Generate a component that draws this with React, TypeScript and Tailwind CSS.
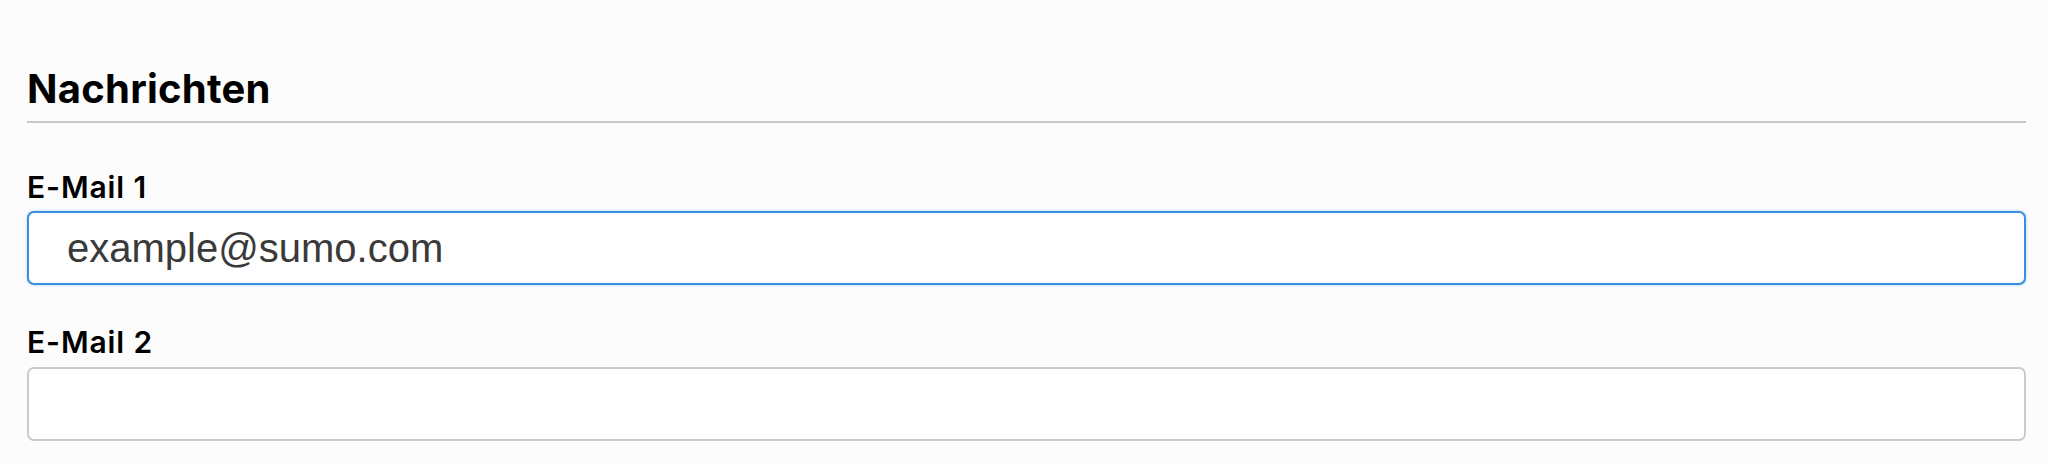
import { useState } from 'react';

const Field = ({ label, value, focused }: { label: string; value: string; focused?: boolean }) => {
  const [text, setText] = useState(value);
  return (
    <div className="flex flex-col">
      <label className="text-[30px] leading-[35px] font-semibold tracking-[0.9px] text-black font-['Inter','Liberation_Sans',sans-serif]">
        {label}
      </label>
      <input
        value={text}
        onChange={(e) => setText(e.target.value)}
        className={
          focused
            ? 'mt-[6px] h-[74px] w-full rounded-[7px] border-2 border-[#3b8ede] bg-white pl-[38px] text-[40px] text-[#3a3a3a] outline-none shadow-[0_0_3px_rgba(59,142,222,0.45)] font-["Liberation_Sans",Arial,sans-serif]'
            : 'mt-[7px] h-[74px] w-full rounded-[7px] border-2 border-[#cbcbcb] bg-white pl-[38px] text-[40px] text-[#3a3a3a] outline-none font-["Liberation_Sans",Arial,sans-serif]'
        }
      />
    </div>
  );
}

export default function App() {
  return (
    <div className="min-h-[464px] w-full bg-[#fcfcfc] pl-[27px] pr-[22px] pt-[65px]">
      <h2 className="border-b-2 border-[#c9c9c9] pb-[8px] text-[40px] leading-[48px] font-bold tracking-[0.25px] text-black font-['Inter','Liberation_Sans',sans-serif]">
        Nachrichten
      </h2>
      <div className="mt-[47px] flex flex-col gap-[40px]">
        <Field label="E-Mail 1" value="example@sumo.com" focused />
        <Field label="E-Mail 2" value="" />
      </div>
    </div>
  );
}
